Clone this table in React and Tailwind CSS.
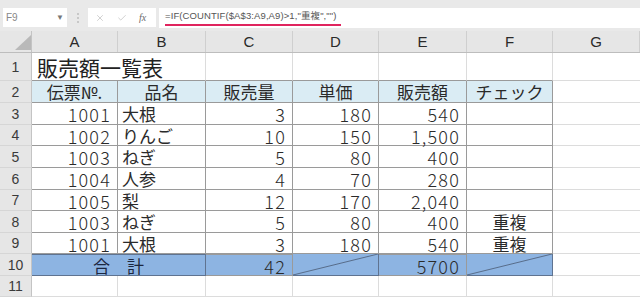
import { X, Check } from 'lucide-react';

const JP = "font-['Noto_Sans_CJK_JP','Noto_Sans',sans-serif]";
const cols = ['A', 'B', 'C', 'D', 'E', 'F', 'G'];
const grid = 'grid grid-cols-[32px_86px_88px_87px_86px_88px_86px_1fr]';
const heights = ['h-[22px]', 'h-[22px]', 'h-[21px]', 'h-[22px]', 'h-[22px]', 'h-[21px]', 'h-[22px]', 'h-[21px]', 'h-[22px]', 'h-[21px]'];

const rows = [
  ['1001', '大根', '3', '180', '540', ''],
  ['1002', 'りんご', '10', '150', '1,500', ''],
  ['1003', 'ねぎ', '5', '80', '400', ''],
  ['1004', '人参', '4', '70', '280', ''],
  ['1005', '梨', '12', '170', '2,040', ''],
  ['1003', 'ねぎ', '5', '80', '400', '重複'],
  ['1001', '大根', '3', '180', '540', '重複'],
];

function RowHead({ n }) {
  return (
    <div className="flex items-center justify-center bg-[#e6e6e6] border-r border-b border-r-[#c4c4c4] border-b-[#d6d6d6] text-[14px] leading-none text-[#3a3a3a] font-['Liberation_Sans',sans-serif]">
      {n}
    </div>
  );
}

function Num({ v, className = '' }) {
  return (
    <div className={`flex items-center justify-end pr-[6px] pt-[1px] border-r border-b border-[#9a9a9a] text-[18px] leading-none tracking-[1.2px] text-[#2a2a2a] font-light ${JP} ${className}`}>
      {v}
    </div>
  );
}

function Diag() {
  return (
    <div className="relative bg-[#8db4e2] border-r border-b border-[#5f7390]">
      <svg className="absolute inset-0 w-full h-full" preserveAspectRatio="none" viewBox="0 0 100 20">
        <line x1="0" y1="20" x2="100" y2="0" stroke="#4a5a74" strokeWidth="0.8" vectorEffect="non-scaling-stroke" />
      </svg>
    </div>
  );
}

export default function App() {
  return (
    <div className="w-[640px] h-[297px] overflow-hidden bg-white select-none">
      {/* toolbar */}
      <div className="h-[31px] bg-[#e9e9e9] flex items-start pt-[8px] pl-[3px]">
        <div className="w-[64px] h-[19px] bg-white flex items-center justify-between px-[3px] text-[10px] text-[#888] font-['Liberation_Sans',sans-serif]">
          <span>F9</span>
          <span className="text-[8px] text-[#777]">▼</span>
        </div>
        <div className="w-[21px] h-[19px] flex flex-col items-center justify-center gap-[2px]">
          <span className="w-[2px] h-[2px] bg-[#c8c8c8]" />
          <span className="w-[2px] h-[2px] bg-[#c8c8c8]" />
          <span className="w-[2px] h-[2px] bg-[#c8c8c8]" />
        </div>
        <div className="w-[68px] h-[19px] bg-white flex items-center gap-[12px] pl-[7px]">
          <X size={10} strokeWidth={1.5} className="text-[#b5b5b5]" />
          <Check size={10} strokeWidth={1.5} className="text-[#b5b5b5]" />
          <span className="italic text-[10px] text-[#6a6a6a] font-['Liberation_Serif',serif]">fx</span>
        </div>
        <div className="ml-[3px] flex-1 h-[20px] bg-white pl-[6px] relative">
          <span className="absolute left-[6px] top-[2px] text-[9.5px] leading-[12px] text-[#555] font-['Liberation_Sans','Noto_Sans_CJK_JP',sans-serif] tracking-[0.1px]">
            =IF(COUNTIF($A$3:A9,A9)&gt;1,"重複","")
          </span>
          <span className="absolute left-[6px] top-[16px] w-[176px] h-[2px] bg-[#e0245e]" />
        </div>
      </div>

      {/* column headers */}
      <div className={`${grid} h-[22px] bg-[#e6e6e6] border-b border-[#bdbdbd]`}>
        <div className="relative border-r border-[#c4c4c4]">
          <svg className="absolute left-[15px] top-[4px]" width="16" height="15" viewBox="0 0 16 15">
            <polygon points="16,0 16,15 0,15" fill="#b9b9b9" />
          </svg>
        </div>
        {cols.map((c) => (
          <div key={c} className="flex items-center justify-center border-r border-[#cfcfcf] text-[15px] leading-none text-[#2a2a2a] font-['Liberation_Sans',sans-serif]">
            {c}
          </div>
        ))}
      </div>

      {/* row 1 */}
      <div className={`${grid} h-[28px]`}>
        <RowHead n="1" />
        <div className={`col-span-2 flex items-end pl-[5px] pb-[2px] border-r border-b border-r-[#dcdcdc] border-b-[#9a9a9a] text-[21px] leading-[22px] text-[#222] ${JP}`}>
          販売額一覧表
        </div>
        {[0, 1, 2, 3].map((i) => (
          <div key={i} className="border-r border-b border-r-[#dcdcdc] border-b-[#9a9a9a]" />
        ))}
        <div className="border-b border-[#dcdcdc]" />
      </div>

      {/* row 2 headers */}
      <div className={`${grid} ${heights[0]}`}>
        <RowHead n="2" />
        {['伝票№.', '品名', '販売量', '単価', '販売額', 'チェック'].map((h) => (
          <div key={h} className={`flex items-center justify-center bg-[#daecf4] border-r border-b border-[#9a9a9a] text-[17px] leading-none text-[#2a2a2a] ${JP}`}>
            {h}
          </div>
        ))}
        <div className="border-b border-[#dcdcdc]" />
      </div>

      {/* data rows */}
      {rows.map((r, i) => (
        <div key={i} className={`${grid} ${heights[i + 1]}`}>
          <RowHead n={i + 3} />
          <Num v={r[0]} />
          <div className={`flex items-center pl-[4px] border-r border-b border-[#9a9a9a] text-[17px] leading-none text-[#2a2a2a] ${JP}`}>{r[1]}</div>
          <Num v={r[2]} />
          <Num v={r[3]} />
          <Num v={r[4]} />
          <div className={`flex items-center justify-center border-r border-b border-[#9a9a9a] text-[17px] leading-none text-[#2a2a2a] ${JP}`}>{r[5]}</div>
          <div className="border-b border-[#dcdcdc]" />
        </div>
      ))}

      {/* row 10 total */}
      <div className={`${grid} ${heights[8]}`}>
        <RowHead n="10" />
        <div className={`col-span-2 flex items-center justify-center bg-[#8db4e2] border-t border-r border-b border-[#5f7390] text-[17px] leading-none text-[#1c2740] ${JP}`}>
          合　計
        </div>
        <Num v="42" className="bg-[#8db4e2] border-[#5f7390] border-t text-[#1c2740]" />
        <Diag />
        <Num v="5700" className="bg-[#8db4e2] border-[#5f7390] border-t text-[#1c2740]" />
        <Diag />
        <div className="border-b border-[#dcdcdc]" />
      </div>

      {/* row 11 */}
      <div className={`${grid} ${heights[9]}`}>
        <RowHead n="11" />
        {[0, 1, 2, 3, 4, 5].map((i) => (
          <div key={i} className="border-r border-b border-[#dcdcdc]" />
        ))}
        <div className="border-b border-[#dcdcdc]" />
      </div>
    </div>
  );
}
